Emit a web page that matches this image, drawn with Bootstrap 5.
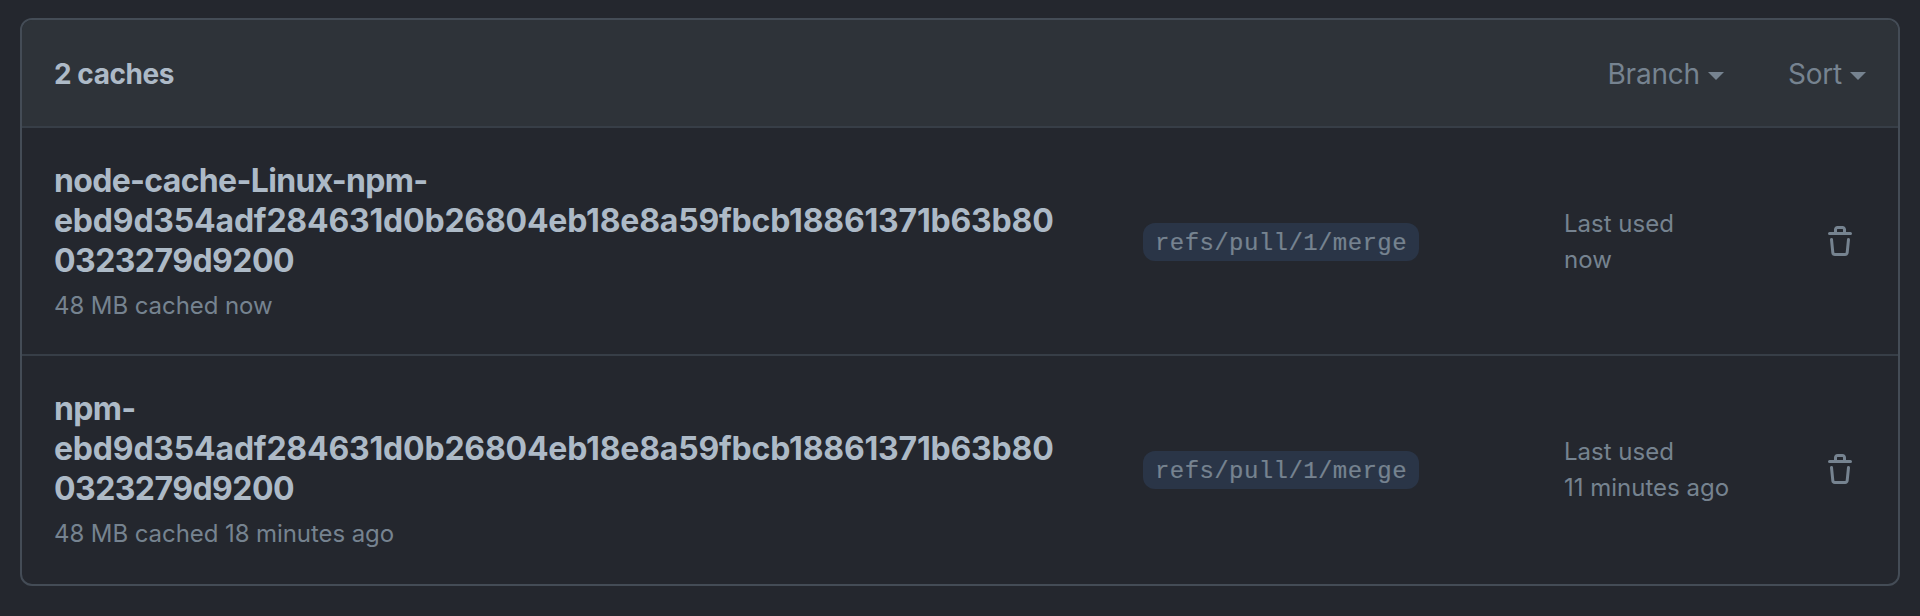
<!DOCTYPE html>
<html lang="en">
<head>
<meta charset="utf-8">
<title>Caches</title>
<link href="https://cdn.jsdelivr.net/npm/bootstrap@5.3.0/dist/css/bootstrap.min.css" rel="stylesheet">
<style>
  body { background: #24272e; color: #adbac7; font-family: Inter, "Liberation Sans", sans-serif; padding: 18px 20px 0; }
  .cache-box { --bs-card-bg: transparent; --bs-card-color: #adbac7; border: 2px solid #444c56; border-radius: 12px; height: 568px; overflow: hidden; }
  .cache-box > .cache-list { border: 0; }
  .cache-head { height: 108px; background: #2e3339; border-bottom: 2px solid #373e47; padding: 2px 32px 0; font-size: 28px; line-height: 42px; }
  .cache-count { font-weight: 700; letter-spacing: -.45px; }
  .cache-filter { color: #768390; letter-spacing: -.2px; gap: 8px; }
  .caret { width: 16px; height: 8px; fill: currentColor; margin-top: 3px; }
  .cache-row { background: transparent; color: #adbac7; border: 0; height: 226px; padding: 0 42px 0 32px; }
  .cache-row + .cache-row { border-top: 2px solid #373e47; height: 230px; padding-bottom: 2px; }
  .cache-name { width: 1089px; padding: 33px 81px 0 0; }
  .cache-key { font-size: 32px; line-height: 40px; font-weight: 700; letter-spacing: -.68px; margin: 0; }
  .cache-hash { letter-spacing: -.2px; }
  .cache-hash-end { letter-spacing: -.55px; }
  .cache-meta { color: #768390; font-size: 24px; line-height: 36px; padding-top: 2px; }
  .cache-key + .cache-meta { margin-top: 5px; letter-spacing: -.08px; }
  .cache-ref { width: 421px; padding-top: 2px; }
  .ref-label { background: #2a3547; color: #768390; border-radius: 12px; padding: 3px 12px 0; height: 38px; line-height: 36px; font-family: "Liberation Mono", monospace; font-size: 24px; letter-spacing: .42px; -webkit-text-stroke: .2px #768390; }
  .trash { width: 32px; height: 32px; fill: #768390; fill-rule: evenodd; margin-top: 2px; }
</style>
</head>
<body>
<main class="card cache-box">
  <header class="cache-head d-flex align-items-center justify-content-between">
    <span class="cache-count">2 caches</span>
    <div class="d-flex">
      <span class="cache-filter d-flex align-items-center me-5 pe-3">Branch <svg class="caret" viewBox="0 0 16 8"><path d="M0 0h16L8 8z"/></svg></span>
      <span class="cache-filter d-flex align-items-center">Sort <svg class="caret" viewBox="0 0 16 8"><path d="M0 0h16L8 8z"/></svg></span>
    </div>
  </header>
  <div class="list-group list-group-flush cache-list">
    <div class="list-group-item cache-row d-flex align-items-center">
      <div class="cache-name align-self-start flex-shrink-0">
        <h2 class="cache-key">node-cache-Linux-npm-<br><span class="cache-hash">ebd9d354adf284631d0b26804eb18e8a59fbcb18861371b63b80</span><wbr><span class="cache-hash-end">0323279d9200</span></h2>
        <div class="cache-meta">48 MB cached now</div>
      </div>
      <div class="cache-ref d-flex flex-shrink-0"><span class="ref-label">refs/pull/1/merge</span></div>
      <div class="cache-meta">Last used<br>now</div>
      <svg class="trash ms-auto" viewBox="0 0 16 16"><path d="M6.5 1.75a.25.25 0 01.25-.25h2.5a.25.25 0 01.25.25V3h-3V1.75zm4.5 0V3h2.25a.75.75 0 010 1.5H2.75a.75.75 0 010-1.5H5V1.75C5 .784 5.784 0 6.75 0h2.5C10.216 0 11 .784 11 1.75zM4.496 6.675a.75.75 0 10-1.492.15l.66 6.6A1.75 1.75 0 005.405 15h5.19c.9 0 1.652-.681 1.741-1.576l.66-6.6a.75.75 0 00-1.492-.149l-.66 6.6a.25.25 0 01-.249.225h-5.19a.25.25 0 01-.249-.225l-.66-6.6z"/></svg>
    </div>
    <div class="list-group-item cache-row d-flex align-items-center">
      <div class="cache-name align-self-start flex-shrink-0">
        <h2 class="cache-key">npm-<br><span class="cache-hash">ebd9d354adf284631d0b26804eb18e8a59fbcb18861371b63b80</span><wbr><span class="cache-hash-end">0323279d9200</span></h2>
        <div class="cache-meta">48 MB cached 18 minutes ago</div>
      </div>
      <div class="cache-ref d-flex flex-shrink-0"><span class="ref-label">refs/pull/1/merge</span></div>
      <div class="cache-meta">Last used<br>11 minutes ago</div>
      <svg class="trash ms-auto" viewBox="0 0 16 16"><path d="M6.5 1.75a.25.25 0 01.25-.25h2.5a.25.25 0 01.25.25V3h-3V1.75zm4.5 0V3h2.25a.75.75 0 010 1.5H2.75a.75.75 0 010-1.5H5V1.75C5 .784 5.784 0 6.75 0h2.5C10.216 0 11 .784 11 1.75zM4.496 6.675a.75.75 0 10-1.492.15l.66 6.6A1.75 1.75 0 005.405 15h5.19c.9 0 1.652-.681 1.741-1.576l.66-6.6a.75.75 0 00-1.492-.149l-.66 6.6a.25.25 0 01-.249.225h-5.19a.25.25 0 01-.249-.225l-.66-6.6z"/></svg>
    </div>
  </div>
</main>
<script src="https://cdn.jsdelivr.net/npm/bootstrap@5.3.0/dist/js/bootstrap.bundle.min.js"></script>
</body>
</html>
